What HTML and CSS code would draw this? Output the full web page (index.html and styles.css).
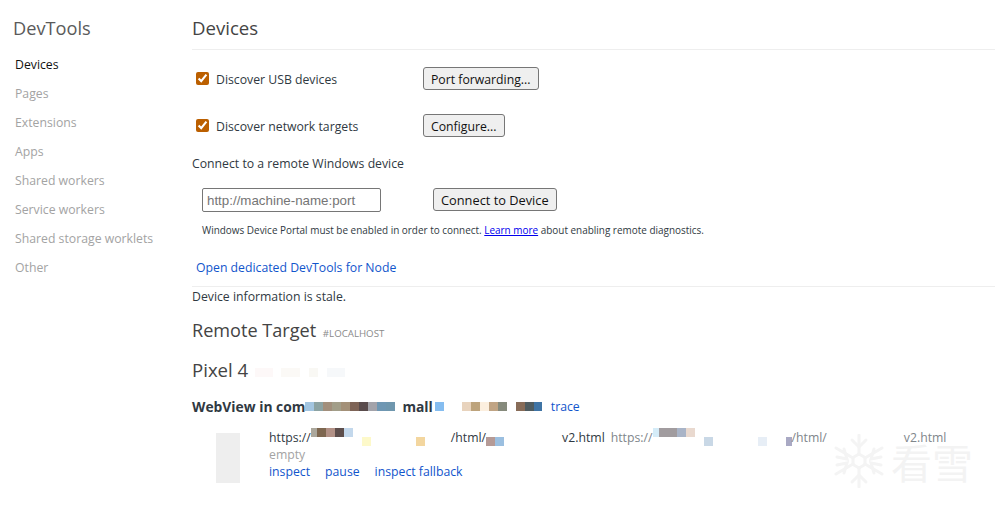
FILE: index.html
```html
<!DOCTYPE html>
<html>
  <head>
    <meta charset="UTF-8">
    <title>Inspect with Chrome Developer Tools</title>
    <link rel="stylesheet" href="styles.css">
  </head>
  <body>
    <nav class="sidebar">
      <h1>DevTools</h1>
      <ul>
        <li class="selected">Devices</li>
        <li>Pages</li>
        <li>Extensions</li>
        <li>Apps</li>
        <li>Shared workers</li>
        <li>Service workers</li>
        <li>Shared storage worklets</li>
        <li>Other</li>
      </ul>
    </nav>
    <main class="content">
      <h1 class="content-header">Devices</h1>
      <div class="option-row">
        <label><input type="checkbox" checked><span>Discover USB devices</span></label>
        <button type="button">Port forwarding...</button>
      </div>
      <div class="option-row">
        <label><input type="checkbox" checked><span>Discover network targets</span></label>
        <button type="button">Configure...</button>
      </div>
      <div class="connect-title">Connect to a remote Windows device</div>
      <div class="connect-row">
        <input type="text" placeholder="http://machine-name:port">
        <button type="button">Connect to Device</button>
      </div>
      <div class="connect-note">Windows Device Portal must be enabled in order to connect. <a href="#">Learn more</a> about enabling remote diagnostics.</div>
      <div class="node-row"><span class="action">Open dedicated DevTools for Node</span></div>
      <div class="stale">Device information is stale.</div>
      <h2 class="section-title">Remote Target <small>#LOCALHOST</small></h2>
      <h2 class="device-title">Pixel 4
        <span class="mosaic device-mosaic">
          <i style="width:18px;background:#fdf8f8"></i><i style="width:8px;background:#fff"></i><i style="width:19px;background:#fbf9f6"></i><i style="width:9px;background:#fff"></i><i style="width:9px;background:#f9f8f4"></i><i style="width:9px;background:#fff"></i><i style="width:18px;background:#f6f8fa"></i>
        </span>
      </h2>
      <div class="browser-title">
        <span class="browser-name">WebView in com</span><span class="mosaic">
          <i style="width:9px;background:#a3c5e0"></i><i style="width:9px;background:#8ca3a3"></i><i style="width:9px;background:#a28f7c"></i><i style="width:9px;background:#a29e89"></i><i style="width:9px;background:#a39078"></i><i style="width:9px;background:#7e6457"></i><i style="width:9px;background:#594b4c"></i><i style="width:9px;background:#a3a3aa"></i><i style="width:9px;background:#6f97b3"></i><i style="width:9px;background:#6f97ae"></i>
        </span><span class="browser-name mall">mall</span><span class="mosaic mall-mosaic">
          <i style="width:9px;background:#85bdf0"></i><i style="width:18px;background:#fff"></i><i style="width:9px;background:#e8d3bd"></i><i style="width:9px;background:#bda37c"></i><i style="width:9px;background:#fcefdf"></i><i style="width:9px;background:#c0a484"></i><i style="width:9px;background:#868a7c"></i><i style="width:9px;background:#fff"></i><i style="width:9px;background:#886c58"></i><i style="width:9px;background:#4f5c60"></i><i style="width:8px;background:#3f74a5"></i>
        </span><span class="action trace">trace</span>
      </div>
      <div class="target">
        <div class="thumbnail"></div>
        <div class="target-info">
          <div class="target-urls">
            <span class="url">https://<span class="mosaic raised">
              <i style="width:6px;background:#aba79c"></i><i style="width:9px;background:#7e6750"></i><i style="width:9px;background:#b29186"></i><i style="width:9px;background:#5d4e4c"></i><i style="width:9px;background:#c3d8ec"></i>
            </span><span class="mosaic gap-a"><i style="width:9px;background:#fdf9ca"></i></span><span class="mosaic gap-b"><i style="width:9px;background:#f3d69f"></i></span><span class="path-a">/html/</span><span class="mosaic gap-c"><i style="width:9px;background:#b59a96"></i><i style="width:9px;background:#9bbfe0"></i></span><span class="file-a">v2.html</span></span>
            <span class="url url-other">https://<span class="mosaic raised">
              <i style="width:6px;background:#d5ecf8"></i><i style="width:18px;background:#a19c9f"></i><i style="width:9px;background:#a9b4c7"></i><i style="width:9px;background:#e9d9cf"></i>
            </span><span class="mosaic gap-d"><i style="width:9px;background:#c9d8e6"></i></span><span class="mosaic gap-e"><i style="width:9px;background:#e7eef6"></i></span><span class="mosaic gap-f"><i style="width:6px;background:#a9a9c4"></i></span><span>/html/</span><span class="file-b">v2.html</span></span>
          </div>
          <div class="target-empty">empty</div>
          <div class="target-actions">
            <span class="action">inspect</span>
            <span class="action">pause</span>
            <span class="action">inspect fallback</span>
          </div>
        </div>
      </div>
    </main>
    <div class="watermark">
      <svg class="flake" width="50" height="54" viewBox="0 0 50 54" fill="none" stroke="#f4f4f4" stroke-width="3" stroke-linecap="round">
        <path d="M25 1v19M25 34v19M2 14l17 10M31 30l17 10M2 40l17-10M31 24l17-10"/>
        <path d="M18 6l7 7 7-7M18 48l7-7 7 7M3 23l10 2-3-10M47 23l-10 2 3-10M3 31l10-2-3 10M47 31l-10-2 3 10"/>
        <path d="M25 20l6 3.5v7l-6 3.5-6-3.5v-7z"/>
      </svg>
      <span>看雪</span>
    </div>
  </body>
</html>
```

FILE: styles.css
```css
* {
  box-sizing: border-box;
}
body {
  margin: 0;
  height: 511px;
  overflow: hidden;
  display: flex;
  font-family: "Open Sans", "Noto Sans", sans-serif;
  font-size: 12.25px;
  color: #303942;
  background: white;
}
h1, h2 {
  margin: 0;
  font-weight: normal;
}
.sidebar {
  width: 192px;
  flex: none;
}
.sidebar h1 {
  font-size: 18.2px;
  height: 49px;
  line-height: 56px;
  padding-left: 13px;
  color: #5a5a5a;
}
.sidebar ul {
  list-style: none;
  margin: 0;
  padding: 1px 0 0 15px;
}
.sidebar li {
  height: 29px;
  line-height: 29px;
  color: #a3a3a3;
}
.sidebar li.selected {
  color: #111;
}
.content {
  flex: 1;
  min-width: 0;
}
.content-header {
  font-size: 18.6px;
  height: 50px;
  line-height: 56px;
  border-bottom: 1px solid #eee;
  color: #444;
}
.option-row {
  display: flex;
  align-items: center;
  height: 47px;
  padding-left: 4px;
}
.option-row:first-of-type {
  margin-top: 5px;
}
.option-row label {
  display: flex;
  align-items: center;
  width: 227px;
}
.option-row label span {
  padding-top: 2px;
}
.option-row input {
  width: 13px;
  height: 13px;
  margin: 0 7px 0 0;
  accent-color: #bb5f00;
}
.option-row button {
  padding-top: 2px;
}
button {
  height: 23px;
  padding: 0 7px;
  border: 1px solid #767676;
  border-radius: 3px;
  background: #efefef;
  font-family: inherit;
  font-size: 12.25px;
  color: #111;
}
.connect-title {
  height: 20px;
  line-height: 20px;
  margin-top: 5px;
}
.connect-row {
  display: flex;
  gap: 52px;
  margin: 14px 0 0 10px;
}
.connect-row input {
  width: 179px;
  height: 24px;
  padding: 0 4px;
  border: 1px solid #767676;
  border-radius: 2px;
  font-family: "Liberation Sans", sans-serif;
  font-size: 13.33px;
}
.connect-row input::placeholder {
  color: #757575;
}
.connect-row button {
  font-size: 12.8px;
}
.connect-note {
  margin: 10px 0 0 10px;
  font-size: 9.95px;
  line-height: 17px;
}
.connect-note a {
  color: #0000ee;
}
.action {
  color: #1155cc;
}
.node-row {
  height: 48px;
  padding: 19px 0 0 4px;
  line-height: 20px;
  border-bottom: 1px solid #eee;
}
.stale {
  height: 19px;
  line-height: 19px;
}
.section-title {
  font-size: 18.1px;
  margin-top: 9px;
  line-height: 30px;
  color: #444;
}
.section-title small {
  font-size: 9.7px;
  color: #8a8a8a;
  margin-left: 2px;
}
.device-title {
  font-size: 18.6px;
  margin-top: 6px;
  line-height: 30px;
  color: #444;
}
.mosaic {
  display: inline-flex;
  vertical-align: middle;
}
.mosaic i {
  display: block;
  height: 9px;
}
.device-mosaic {
  margin-left: 2px;
}
.browser-title {
  display: flex;
  align-items: center;
  height: 20px;
  margin-top: 11px;
  white-space: nowrap;
}
.browser-name {
  font-weight: bold;
  font-size: 13.85px;
}
.mall {
  margin-left: 7px;
}
.mall-mosaic {
  margin-left: 2px;
}
.trace {
  margin-left: 9px;
}
.target {
  display: flex;
  margin: 17px 0 0 24px;
}
.thumbnail {
  width: 24px;
  height: 50px;
  background: #eee;
}
.target-info {
  margin-left: 29px;
  line-height: 17px;
  margin-top: -5px;
}
.target-urls {
  display: flex;
  gap: 6px;
  white-space: nowrap;
}
.url {
  display: inline-flex;
  align-items: center;
}
.url-other {
  color: #80868b;
}
.raised { margin-top: -9px; }
.gap-a { margin-left: 9px; margin-top: 9px; }
.gap-b { margin-left: 45px; margin-top: 9px; }
.path-a { margin-left: 26px; }
.gap-c { margin-top: 9px; }
.file-a { margin-left: 58px; }
.gap-d { margin-left: 9px; margin-top: 9px; }
.gap-e { margin-left: 45px; margin-top: 9px; }
.gap-f { margin-left: 19px; margin-top: 9px; }
.file-b { margin-left: 77px; }
.target-empty {
  color: #a3a3a3;
}
.target-actions {
  display: flex;
  gap: 15px;
}
/* sits over the page corner, as in the capture */
.watermark {
  position: absolute;
  left: 834px;
  top: 434px;
  display: flex;
  align-items: center;
  gap: 7px;
  font-family: "Noto Sans CJK SC", sans-serif;
  font-size: 41px;
  line-height: 46px;
  color: rgba(235, 235, 235, 0.6);
}
```
